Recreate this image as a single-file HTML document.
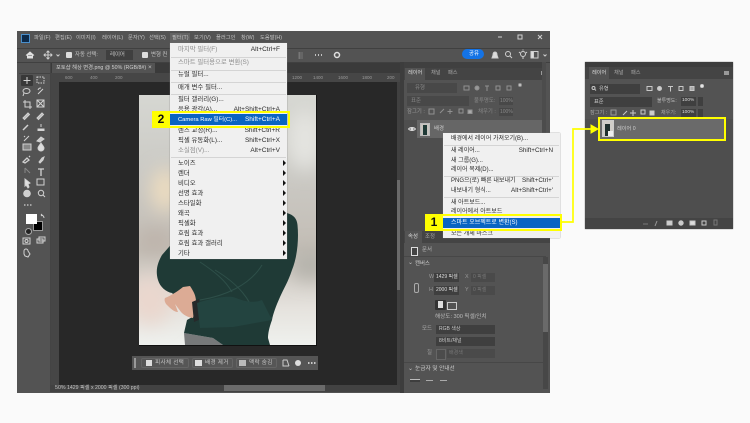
<!DOCTYPE html>
<html lang="ko"><head><meta charset="utf-8"><title>Photoshop</title>
<style>
html,body{margin:0;padding:0;background:#fafafa}
#r{position:relative;width:750px;height:423px;overflow:hidden;background:#fafafa;font:5.4px/10px "Liberation Sans","Noto Sans CJK KR",sans-serif;color:#c4c4c4;filter:blur(.25px)}
#r div{position:absolute}
.t{position:absolute;white-space:nowrap}
.mb{font-size:5.3px}
.m{position:absolute;white-space:nowrap;color:#2a2a2a;font-size:6.4px;line-height:10px}
.c{font-size:6px}
.g{color:#8c8c8c}
.k{position:absolute;white-space:nowrap;color:#2a2a2a;font-size:6.5px;line-height:10px;right:470px}
.k2{font-size:6.3px;right:197px}
.sep{background:#d4d4d4;height:1px}
.box{background:#3f3f3f}
.y{border:2px solid #ffff00;box-sizing:border-box}
.yb{background:#ffff00;color:#111;font:bold 12px/17px "Liberation Sans",sans-serif;text-align:center}
.ar{width:0;height:0;border-left:3.5px solid #111;border-top:3px solid transparent;border-bottom:3px solid transparent}
svg{position:absolute;overflow:visible}
</style></head><body><div id="r">

<!-- main window -->
<div style="left:17px;top:31px;width:533px;height:362px;background:#535353"></div>
<div style="left:17px;top:48px;width:533px;height:1px;background:#404040"></div>
<div style="left:17px;top:62px;width:533px;height:1px;background:#404040"></div>
<div style="left:21px;top:34px;width:7px;height:7px;background:#0c2a4a;border:.5px solid #4a8fcc"></div>
<span class="t mb" style="left:34px;top:33px">파일(F)</span>
<span class="t mb" style="left:55px;top:33px">편집(E)</span>
<span class="t mb" style="left:76px;top:33px">이미지(I)</span>
<span class="t mb" style="left:102px;top:33px">레이어(L)</span>
<span class="t mb" style="left:128px;top:33px">문자(Y)</span>
<span class="t mb" style="left:149px;top:33px">선택(S)</span>
<div style="left:170px;top:33px;width:20px;height:10px;background:#646464"></div>
<span class="t mb" style="left:172px;top:33px">필터(T)</span>
<span class="t mb" style="left:194px;top:33px">보기(V)</span>
<span class="t mb" style="left:216px;top:33px">플러그인</span>
<span class="t mb" style="left:241px;top:33px">창(W)</span>
<span class="t mb" style="left:260px;top:33px">도움말(H)</span>
<!-- window controls -->
<svg style="left:0;top:0" width="750" height="423" fill="none" stroke="#d0d0d0" stroke-width="1">
<path d="M498 37h4"/><rect x="518" y="35" width="4" height="4"/><path d="M538 35l4 4m0-4l-4 4"/>
<path d="M26 55.500l4-3.500 4 3.500M27.500 55v3h2v-2h1v2h2v-3" fill="#e0e0e0" stroke="#e0e0e0"/>
<path d="M48 51v8M44 55h8M46.500 52.500L48 51l1.500 1.500M46.500 57.500L48 59l1.500-1.500M45.500 53.500L44 55l1.500 1.500M50.500 53.500L52 55l-1.500 1.500"/>
<path d="M56.500 54.500l1.500 1.500 1.500-1.500"/>
<path d="M300 52v7M302 52v7M299 52v7" stroke="#777"/>
<path d="M315 55h1M318 55h1M321 55h1" stroke="#e8e8e8" stroke-width="1.400"/>
<circle cx="337" cy="55" r="2.500" stroke-width="1.500" stroke="#e0e0e0"/>
<path d="M495 52c-2 0-2 2-2 3l-1 3h6l-1-3c0-1 0-3-2-3z" fill="#ddd"/>
<circle cx="508" cy="54" r="2.500"/><path d="M510 56l2 2"/>
<circle cx="523" cy="54" r="2.500"/><path d="M522 58h2M519 52l1 1M527 52l-1 1M523 49.500v1"/>
<rect x="531" y="51.500" width="7" height="6.500"/><rect x="531" y="51.500" width="2.500" height="6.500" fill="#ddd"/>
<path d="M543.500 54.500l1.500 1.500 1.500-1.500"/>
</svg>
<div style="left:66px;top:52px;width:6px;height:6px;background:#ddd;border-radius:1px"></div>
<span class="t" style="left:75px;top:50px">자동 선택:</span>
<div class="box" style="left:106px;top:50px;width:27px;height:10px"></div>
<span class="t" style="left:110px;top:50px">레이어</span>
<div style="left:142px;top:52px;width:6px;height:6px;background:#ddd;border-radius:1px"></div>
<span class="t" style="left:151px;top:50px">변형 컨</span>
<div style="left:462px;top:49px;width:22px;height:10px;border-radius:5px;background:#1473e6"></div>
<span class="t" style="left:469px;top:49px;color:#fff">공유</span>

<!-- tab bar / ruler / canvas -->
<div style="left:50px;top:63px;width:350px;height:10px;background:#3a3a3a"></div>
<div style="left:52px;top:63px;width:103px;height:10px;background:#535353"></div>
<span class="t" style="left:56px;top:63px;font-size:5.300px;color:#d0d0d0">포토샵 해상 변경.png @ 50% (RGB/8#)</span>
<span class="t" style="left:148px;top:63px;font-size:6.500px">×</span>
<div style="left:50px;top:73px;width:350px;height:9px;background:#464646"></div>
<div style="left:50px;top:73px;width:9px;height:312px;background:#464646"></div>
<span class="t" style="left:65px;top:73px;font-size:4.500px;color:#999">600</span>
<span class="t" style="left:90px;top:73px;font-size:4.500px;color:#999">400</span>
<span class="t" style="left:115px;top:73px;font-size:4.500px;color:#999">200</span>
<span class="t" style="left:292px;top:73px;font-size:4.500px;color:#999">1200</span>
<span class="t" style="left:313px;top:73px;font-size:4.500px;color:#999">1400</span>
<span class="t" style="left:338px;top:73px;font-size:4.500px;color:#999">1600</span>
<span class="t" style="left:362px;top:73px;font-size:4.500px;color:#999">1800</span>
<span class="t" style="left:387px;top:73px;font-size:4.500px;color:#999">200</span>
<div style="left:59px;top:82px;width:338px;height:303px;background:#282828"></div>
<div style="left:397px;top:82px;width:3px;height:303px;background:#404040"></div>
<div style="left:397px;top:180px;width:3px;height:110px;background:#6a6a6a"></div>
<div style="left:400px;top:62px;width:4px;height:331px;background:#3d3d3d"></div>

<!-- status -->
<div style="left:50px;top:385px;width:350px;height:7px;background:#424242"></div>
<span class="t" style="left:55px;top:383px;font-size:5.300px">50%</span>
<span class="t" style="left:67px;top:383px;font-size:5.200px">1429 픽셀 x 2000 픽셀 (300 ppi)</span>
<div style="left:224px;top:385px;width:101px;height:6px;background:#6b6b6b"></div>

<!-- photo -->
<svg style="left:139px;top:95px" width="177" height="250" viewBox="139 95 177 250">
<defs>
<filter id="b" x="-30%" y="-30%" width="160%" height="160%"><feGaussianBlur stdDeviation="9"/></filter>
<linearGradient id="bg" x1="0" y1="0" x2="0" y2="1">
<stop offset="0" stop-color="#d6d7d2"/><stop offset=".3" stop-color="#cbcac5"/><stop offset=".62" stop-color="#c3bdb5"/><stop offset=".85" stop-color="#e5e2dd"/><stop offset="1" stop-color="#eff1ee"/></linearGradient>
<clipPath id="c"><rect x="139" y="95" width="177" height="250"/></clipPath>
</defs>
<g clip-path="url(#c)">
<rect x="139" y="95" width="177" height="250" fill="url(#bg)"/>
<g filter="url(#b)">
<ellipse cx="165" cy="190" rx="14" ry="22" fill="#ecdcc0"/>
<ellipse cx="150" cy="300" rx="22" ry="25" fill="#ead7ce"/>
<ellipse cx="305" cy="140" rx="18" ry="30" fill="#e4e4e0"/>
<ellipse cx="310" cy="265" rx="20" ry="16" fill="#b5b3ac"/>
<ellipse cx="155" cy="240" rx="18" ry="12" fill="#bdb3aa"/>
</g>
<path d="M185 345L184 333L213 338L223 345Z" fill="#77797a"/>
<path d="M200 200L287 213C294 215 297 219 297.500 225C299 240 297 258 292 270C288 282 284 288 280 297C276 306 273 314 272 320C269 328 268 334 268 338L270 345L223 345L213 338L184 333L187 320L194 316L172 293C166 292 160 287 158 280C155 270 158 262 162 255L175 240Z" fill="#1f3a36"/>
<path d="M200 300C225 296 250 285 262 265M202 326C235 325 258 322 272 318M215 270C240 285 250 300 255 315M200 262C215 272 225 280 232 292" stroke="#2e4f49" stroke-width="1" fill="none"/>
<path d="M165 298C172 295 178 291 183 287L190 286C194 292 196 296 196 302L193 318C187 317 184 315 181 312L175 304L178 312C174 312 170 308 167 305C165 303 164 300 165 298Z" fill="#dcab95"/>
<path d="M192 302L199 299L201 319L194 322Z" fill="#26292a"/>
<path d="M197 303C210 299 222 296 233 297C237 298 250 305 262 300L272 320L233 327L200 328Z" fill="#234440"/>
</g>
</svg>
<div style="left:316px;top:95px;width:1px;height:250px;background:#111"></div>
<div style="left:139px;top:345px;width:178px;height:1px;background:#111"></div>

<!-- contextual bar -->
<div style="left:132px;top:356px;width:186px;height:14px;background:#555"></div>
<div style="left:134px;top:358px;width:2px;height:10px;background:#999"></div>
<div style="left:141px;top:358px;width:48px;height:10px;background:#565656;border:1px solid #646464;border-radius:2px;box-sizing:border-box"></div>
<div style="left:192px;top:358px;width:41px;height:10px;background:#565656;border:1px solid #646464;border-radius:2px;box-sizing:border-box"></div>
<div style="left:236px;top:358px;width:41px;height:10px;background:#565656;border:1px solid #646464;border-radius:2px;box-sizing:border-box"></div>
<div style="left:146px;top:360px;width:6px;height:6px;background:#ddd"></div>
<div style="left:195px;top:360px;width:7px;height:6px;background:#ddd"></div>
<div style="left:239px;top:360px;width:7px;height:6px;background:#bbb"></div>
<span class="t" style="left:155px;top:358px;font-size:5.600px;letter-spacing:.3px">피사체 선택</span>
<span class="t" style="left:205px;top:358px;font-size:5.600px;letter-spacing:.3px">배경 제거</span>
<span class="t" style="left:249px;top:358px;font-size:5.600px;letter-spacing:.3px">맥락 숨김</span>
<svg style="left:0;top:0" width="750" height="423" fill="none" stroke="#ccc" stroke-width="1">
<path d="M283 360v6h6M283 360h4l2 6"/><circle cx="298" cy="363" r="3" fill="#ddd" stroke="none"/>
<path d="M308 363h1.500M311 363h1.500M314 363h1.500" stroke="#eee" stroke-width="1.400"/>
</svg>

<!-- toolbar -->
<div style="left:19px;top:63px;width:31px;height:322px;background:#535353"></div>
<div style="left:50px;top:63px;width:1px;height:322px;background:#444"></div>
<div style="left:19px;top:73px;width:31px;height:1px;background:#444"></div>
<div style="left:21px;top:75px;width:12px;height:11px;background:#383838;border-radius:1px"></div>
<svg style="left:0;top:0" width="750" height="423" fill="none" stroke="#d2d2d2" stroke-width="1">
<path d="M27 77v7M23.500 80.500h7"/>
<rect x="37" y="77" width="7" height="6" stroke-dasharray="1.500 1"/>
<ellipse cx="26.500" cy="91" rx="3.500" ry="2.500"/><path d="M24 93l-1 3"/>
<path d="M38 94l5-5M38 90a3 3 0 0 1 3-2"/>
<path d="M25 100v7h7M23 102h7v7"/><rect x="37" y="100" width="7" height="7"/><path d="M37 100l7 7m0-7l-7 7"/>
<path d="M23 118l5-5 1.500 1.500-5 5z" fill="#bbb"/><path d="M37 118l5-5 1.500 1.500-5 5z" fill="#bbb"/>
<path d="M23 130l5-5" stroke-width="1.500"/><path d="M41 124v3M38 129h6v1.500h-6z" fill="#ddd"/>
<path d="M24 141l5-5M24 136l1 1"/><path d="M37 141l4-4 3 2-4 3z" fill="#ccc"/>
<rect x="23" y="144" width="8" height="6" fill="#888"/><path d="M41 143c-2 3-3 4-3 5a3 3 0 0 0 6 0c0-1-1-2-3-5z" fill="#ddd"/>
<path d="M23 162l4-4 2 2-4 3zM29 156l1 1" stroke-width="1.300"/><path d="M39 162l3-4 2-1-1 3-3 3z" fill="#ccc"/>
<path d="M25 168l5 5M25 168v5" stroke="#888"/><path d="M38 169h6M41 169v7" stroke-width="1.300"/>
<path d="M25 179l5 4-2 1 1 3-1 1-2-3-1 1z" fill="#e0e0e0"/><rect x="37" y="179" width="7" height="6"/>
<circle cx="27" cy="193.500" r="3.300" fill="#cfcfcf"/><circle cx="41" cy="193" r="2.700"/><path d="M43 195l2 2"/>
<path d="M24 205h1.500M27 205h1.500M30 205h1.500" stroke-width="1.300"/>
<path d="M41 215a3 3 0 0 1 3 3M41 215l1-1m-1 1l1 1"/>
<rect x="23" y="238" width="7" height="6"/><circle cx="26.500" cy="241" r="1.500"/>
<rect x="37" y="239" width="6" height="4"/><rect x="39" y="237" width="6" height="4"/>
<path d="M24 251a2 2 0 0 1 4 0l2 3-2 3-3-1-1-2z"/>
</svg>
<div style="left:33px;top:221px;width:10px;height:10px;background:#000;border:1px solid #999;box-sizing:border-box"></div>
<div style="left:26px;top:214px;width:11px;height:10px;background:#fff"></div>
<div style="left:25px;top:228px;width:5px;height:5px;background:#222;border:.5px solid #aaa;border-radius:50%"></div>

<!-- layers panel (main) -->
<div style="left:404px;top:62px;width:142px;height:6px;background:#404040"></div>
<div style="left:404px;top:68px;width:142px;height:12px;background:#444"></div>
<div style="left:405px;top:68px;width:20px;height:12px;background:#535353"></div>
<span class="t" style="left:408px;top:68px;font-size:5.200px;color:#ddd">레이어</span>
<span class="t" style="left:431px;top:68px;font-size:5.200px;color:#aaa">채널</span>
<span class="t" style="left:448px;top:68px;font-size:5.200px;color:#aaa">패스</span>
<div style="left:541px;top:71px;width:5px;height:4px;background:#999"></div>
<div style="left:407px;top:83px;width:50px;height:10px;background:#484848"></div>
<span class="t" style="left:415px;top:83px;color:#888">유형</span>
<svg style="left:0;top:0" width="750" height="423" fill="none" stroke="#909090" stroke-width="1">
<rect x="464" y="86" width="5" height="4"/><circle cx="477" cy="88" r="2" fill="#999"/><path d="M485 86h4M487 86v5"/><rect x="496" y="86" width="4" height="4"/><rect x="507" y="86" width="4" height="4"/><circle cx="520" cy="85" r="1.500" fill="#ccc"/>
<rect x="429" y="109" width="5" height="5"/>
<path d="M440 113l4-4"/><path d="M450 109v5M447.500 111.500h5"/><rect x="459" y="109" width="4" height="4"/><rect x="468" y="110" width="4" height="3.500" fill="#aaa"/><rect x="531" y="127" width="3.500" height="4"/>
</svg>
<div style="left:407px;top:96px;width:62px;height:10px;background:#484848"></div>
<span class="t" style="left:411px;top:96px;color:#888">표준</span>
<span class="t" style="left:474px;top:96px;color:#888">불투명도:</span>
<div style="left:499px;top:97px;width:14px;height:8px;background:#484848"></div>
<span class="t" style="left:500px;top:96px;font-size:5px;color:#888">100%</span>
<span class="t" style="left:407px;top:107px;color:#999">잠그기 :</span>
<span class="t" style="left:478px;top:107px;color:#888">채우기 :</span>
<div style="left:499px;top:108px;width:14px;height:8px;background:#484848"></div>
<span class="t" style="left:500px;top:107px;font-size:5px;color:#888">100%</span>
<div style="left:404px;top:120px;width:142px;height:111px;background:#4e4e4e"></div>
<div style="left:417px;top:120px;width:125px;height:18px;background:#666"></div>
<svg style="left:408px;top:126px" width="8" height="6" fill="none" stroke="#ddd"><path d="M.5 3C2 1 6 1 7.500 3 6 5 2 5 .5 3z"/><circle cx="4" cy="3" r="1" fill="#ddd"/></svg>
<div style="left:420px;top:123px;width:10px;height:13px;background:#c8c5c0;border:1px solid #bbb;box-sizing:border-box"></div>
<div style="left:423px;top:125px;width:4px;height:10px;background:#1f3a36"></div>
<span class="t" style="left:434px;top:124px;color:#ccc">배경</span>
<div style="left:542px;top:62px;width:4px;height:170px;background:#4c4c4c"></div>

<!-- properties -->
<div style="left:404px;top:231px;width:146px;height:12px;background:#444"></div>
<div style="left:405px;top:231px;width:17px;height:12px;background:#535353"></div>
<span class="t" style="left:408px;top:232px;color:#ddd">속성</span>
<span class="t" style="left:425px;top:232px;color:#aaa">조정</span>
<div style="left:404px;top:243px;width:146px;height:150px;background:#535353"></div>
<div style="left:404px;top:256px;width:142px;height:1px;background:#474747"></div>
<div style="left:411px;top:247px;width:5px;height:7px;border:1px solid #ddd;background:#444"></div>
<span class="t" style="left:422px;top:245px;color:#bbb">문서</span>
<span class="t" style="left:408px;top:258px;font-size:6px">⌄</span>
<span class="t" style="left:415px;top:259px;color:#ccc">캔버스</span>
<div style="left:414px;top:283px;width:3px;height:8px;border:1px solid #aaa;border-radius:2px"></div>
<span class="t" style="left:429px;top:272px;color:#999">W</span>
<div class="box" style="left:434px;top:273px;width:25px;height:9px"></div>
<span class="t" style="left:436px;top:272px;font-size:5px;color:#ddd">1429 픽셀</span>
<span class="t" style="left:465px;top:272px;color:#999">X</span>
<div style="left:471px;top:273px;width:24px;height:9px;background:#4a4a4a"></div>
<span class="t" style="left:473px;top:272px;font-size:5px;color:#777">0 픽셀</span>
<span class="t" style="left:429px;top:285px;color:#999">H</span>
<div class="box" style="left:434px;top:286px;width:25px;height:9px"></div>
<span class="t" style="left:436px;top:285px;font-size:5px;color:#ddd">2000 픽셀</span>
<span class="t" style="left:465px;top:285px;color:#999">Y</span>
<div style="left:471px;top:286px;width:24px;height:9px;background:#4a4a4a"></div>
<span class="t" style="left:473px;top:285px;font-size:5px;color:#777">0 픽셀</span>
<div style="left:435px;top:300px;width:11px;height:10px;background:#333;border-radius:1px"></div>
<div style="left:438px;top:301px;width:5px;height:7px;background:#ddd"></div>
<div style="left:447px;top:302px;width:8px;height:6px;border:1px solid #ccc"></div>
<span class="t" style="left:435px;top:312px;font-size:5.600px;color:#bbb">해상도: 300 픽셀/인치</span>
<span class="t" style="left:422px;top:324px;color:#aaa">모드</span>
<div class="box" style="left:436px;top:325px;width:59px;height:9px"></div>
<span class="t" style="left:439px;top:324px;font-size:5px;color:#ccc">RGB 색상</span>
<div class="box" style="left:436px;top:337px;width:59px;height:9px"></div>
<span class="t" style="left:439px;top:336px;font-size:5px;color:#ccc">8비트/채널</span>
<span class="t" style="left:427px;top:348px;color:#999">칠</span>
<div style="left:436px;top:349px;width:8px;height:9px;background:#4c4c4c;border:.5px solid #666"></div>
<div style="left:447px;top:349px;width:48px;height:9px;background:#4a4a4a"></div>
<span class="t" style="left:449px;top:348px;font-size:5px;color:#777">배경색</span>
<div style="left:404px;top:362px;width:140px;height:1px;background:#474747"></div>
<span class="t" style="left:408px;top:364px;font-size:6px">⌄</span>
<span class="t" style="left:415px;top:364px;font-size:5.700px;color:#ccc">눈금자 및 안내선</span>
<div style="left:410px;top:379px;width:10px;height:3px;background:#3e3e3e;border-top:1px solid #bbb;box-sizing:border-box"></div>
<div style="left:426px;top:380px;width:7px;height:1px;background:#aaa"></div>
<div style="left:440px;top:380px;width:7px;height:1px;background:#aaa"></div>
<div style="left:543px;top:257px;width:5px;height:132px;background:#474747"></div>
<div style="left:543px;top:264px;width:5px;height:68px;background:#6a6a6a"></div>

<!-- filter menu -->
<div style="left:170px;top:43px;width:117px;height:216px;background:#f0f0f0;box-shadow:0 0 1px #777"></div>
<span class="m g" style="left:178px;top:45px">마지막 필터(F)</span><span class="k g" style="top:45px">Alt+Ctrl+F</span>
<div class="sep" style="left:171px;top:57px;width:115px"></div>
<span class="m g" style="left:178px;top:58px">스마트 필터용으로 변환(S)</span>
<div class="sep" style="left:171px;top:70px;width:115px"></div>
<span class="m" style="left:178px;top:70px">뉴럴 필터...</span>
<div class="sep" style="left:171px;top:82px;width:115px"></div>
<span class="m" style="left:178px;top:83px">매개 변수 필터...</span>
<div class="sep" style="left:171px;top:94px;width:115px"></div>
<span class="m" style="left:178px;top:95px">필터 갤러리(G)...</span>
<span class="m" style="left:178px;top:105px">응용 광각(A)...</span><span class="k" style="top:105px">Alt+Shift+Ctrl+A</span>
<div style="left:170px;top:114px;width:117px;height:11px;background:#0a64c2"></div>
<span class="m" style="left:178px;top:115px;color:#fff;font-size:5.800px">Camera Raw 필터(C)...</span><span class="k" style="top:115px;color:#fff">Shift+Ctrl+A</span>
<span class="m" style="left:178px;top:126px">렌즈 교정(R)...</span><span class="k" style="top:126px">Shift+Ctrl+R</span>
<span class="m" style="left:178px;top:136px">픽셀 유동화(L)...</span><span class="k" style="top:136px">Shift+Ctrl+X</span>
<span class="m g" style="left:178px;top:146px">소실점(V)...</span><span class="k g" style="top:146px">Alt+Ctrl+V</span>
<div class="sep" style="left:171px;top:157px;width:115px"></div>
<span class="m" style="left:178px;top:159px">노이즈</span>
<span class="m" style="left:178px;top:169px">렌더</span>
<span class="m" style="left:178px;top:179px">비디오</span>
<span class="m" style="left:178px;top:189px">선명 효과</span>
<span class="m" style="left:178px;top:199px">스타일화</span>
<span class="m" style="left:178px;top:209px">왜곡</span>
<span class="m" style="left:178px;top:219px">픽셀화</span>
<span class="m" style="left:178px;top:229px">호림 효과</span>
<span class="m" style="left:178px;top:239px">호림 효과 갤러리</span>
<span class="m" style="left:178px;top:249px">기타</span>
<div class="ar" style="left:283px;top:160px"></div><div class="ar" style="left:283px;top:170px"></div><div class="ar" style="left:283px;top:180px"></div><div class="ar" style="left:283px;top:190px"></div><div class="ar" style="left:283px;top:200px"></div><div class="ar" style="left:283px;top:210px"></div><div class="ar" style="left:283px;top:220px"></div><div class="ar" style="left:283px;top:230px"></div><div class="ar" style="left:283px;top:240px"></div><div class="ar" style="left:283px;top:250px"></div>
<div class="y" style="left:152px;top:111px;width:138px;height:17px"></div>
<div class="yb" style="left:152px;top:111px;width:18px;height:17px">2</div>

<!-- context menu -->
<div style="left:443px;top:133px;width:117px;height:105px;background:#f0f0f0;box-shadow:0 0 1px #777"></div>
<span class="m c" style="left:451px;top:134px">배경에서 레이어 가져오기(B)...</span>
<div class="sep" style="left:444px;top:145px;width:115px"></div>
<span class="m c" style="left:451px;top:146px">새 레이어...</span><span class="k k2" style="top:146px">Shift+Ctrl+N</span>
<span class="m c" style="left:451px;top:156px">새 그룹(G)...</span>
<span class="m c" style="left:451px;top:165px">레이어 복제(D)...</span>
<div class="sep" style="left:444px;top:176px;width:115px"></div>
<span class="m c" style="left:451px;top:176px">PNG으(로) 빠른 내보내기</span><span class="k k2" style="top:176px">Shift+Ctrl+'</span>
<span class="m c" style="left:451px;top:186px">내보내기 형식...</span><span class="k k2" style="top:186px">Alt+Shift+Ctrl+'</span>
<div class="sep" style="left:444px;top:197px;width:115px"></div>
<span class="m c" style="left:451px;top:198px">새 아트보드...</span>
<span class="m c" style="left:451px;top:207px">레이어에서 아트보드</span>
<div style="left:443px;top:218px;width:117px;height:10px;background:#0a64c2"></div>
<span class="m c" style="left:451px;top:218px;color:#fff">스마트 오브젝트로 변환(S)</span>
<span class="m c" style="left:451px;top:229px">모든 개체 마스크</span>
<div class="y" style="left:425px;top:214px;width:137px;height:17px"></div>
<div class="yb" style="left:425px;top:214px;width:18px;height:17px">1</div>

<!-- right floating panel -->
<div style="left:585px;top:62px;width:148px;height:167px;background:#4e4e4e;box-shadow:0 0 1px #666"></div>
<div style="left:585px;top:62px;width:148px;height:5px;background:#3d3d3d"></div>
<div style="left:585px;top:67px;width:148px;height:12px;background:#444"></div>
<div style="left:589px;top:67px;width:20px;height:12px;background:#535353"></div>
<span class="t" style="left:592px;top:68px;font-size:5.200px;color:#ddd">레이어</span>
<span class="t" style="left:614px;top:68px;font-size:5.200px;color:#aaa">채널</span>
<span class="t" style="left:631px;top:68px;font-size:5.200px;color:#aaa">패스</span>
<div style="left:724px;top:71px;width:5px;height:4px;background:#999"></div>
<div style="left:585px;top:79px;width:148px;height:40px;background:#535353"></div>
<div class="box" style="left:590px;top:84px;width:50px;height:10px"></div>
<span class="t" style="left:599px;top:84px;font-size:5.200px;color:#ccc">유형</span>
<div class="box" style="left:590px;top:97px;width:62px;height:10px"></div>
<span class="t" style="left:594px;top:97px;font-size:5.200px;color:#ccc">표준</span>
<span class="t" style="left:657px;top:96px;font-size:5px;color:#bbb">불투명도:</span>
<div class="box" style="left:681px;top:97px;width:15px;height:9px"></div>
<span class="t" style="left:682px;top:96px;font-size:4.800px;color:#ddd">100%</span>
<div class="box" style="left:698px;top:97px;width:5px;height:9px"></div>
<span class="t" style="left:590px;top:108px;font-size:5.200px;color:#aaa">잠그기 :</span>
<span class="t" style="left:661px;top:108px;font-size:5px;color:#aaa">채우기:</span>
<div class="box" style="left:681px;top:109px;width:15px;height:9px"></div>
<span class="t" style="left:682px;top:108px;font-size:4.800px;color:#ddd">100%</span>
<div class="box" style="left:698px;top:109px;width:5px;height:9px"></div>
<svg style="left:0;top:0" width="750" height="423" fill="none" stroke="#c8c8c8" stroke-width="1">
<circle cx="593.500" cy="88" r="1.500"/><path d="M595 89.500l1 1"/>
<rect x="647" y="86.500" width="5" height="4"/><circle cx="659.500" cy="88.500" r="2" fill="#ccc"/><path d="M668 86.500h5M670.500 86.500v5"/><rect x="679" y="86.500" width="4" height="4"/><rect x="690" y="86.500" width="4" height="4" fill="#aaa"/><circle cx="702" cy="86" r="1.500" fill="#eee"/>
<rect x="611" y="110" width="5" height="5" stroke="#999"/><path d="M623 115l4-4M633 110v6M630 113h6"/><rect x="641" y="110" width="4" height="4"/><rect x="650" y="111" width="4" height="4" fill="#ccc"/>
</svg>
<div style="left:599px;top:118px;width:126px;height:23px;background:#6a6a6a"></div>
<div style="left:602px;top:120px;width:12px;height:17px;background:#d0cdc8;border:1px solid #ccc;box-sizing:border-box"></div>
<div style="left:605px;top:124px;width:5px;height:12px;background:#1f2f2d"></div>
<div style="left:608px;top:131px;width:5px;height:5px;background:#eee"></div>
<span class="t" style="left:617px;top:124px;font-size:5.200px;color:#cfcfcf">레이어 0</span>
<div class="y" style="left:598px;top:117px;width:128px;height:24px"></div>
<div style="left:585px;top:218px;width:148px;height:11px;background:#444"></div>
<svg style="left:0;top:0" width="750" height="423" fill="none" stroke="#c8c8c8" stroke-width="1">
<path d="M643 224h5" stroke="#777"/><path d="M655 226l2-5" stroke="#999"/><rect x="667" y="221" width="5" height="4" fill="#ccc"/><circle cx="681" cy="223" r="2.200" fill="#ccc"/><rect x="690" y="221" width="5" height="4" fill="#ddd"/><rect x="702" y="221" width="4" height="4"/><rect x="714" y="220" width="3" height="5" stroke="#777"/>
</svg>

<!-- connector -->
<svg style="left:0;top:0" width="750" height="423" fill="none">
<path d="M562 222H573V129H592" stroke="#ffff00" stroke-width="1.700"/>
<path d="M591 125l7 4-7 4z" fill="#ffff00" stroke="#ffff00"/>
</svg>

</div></body></html>
